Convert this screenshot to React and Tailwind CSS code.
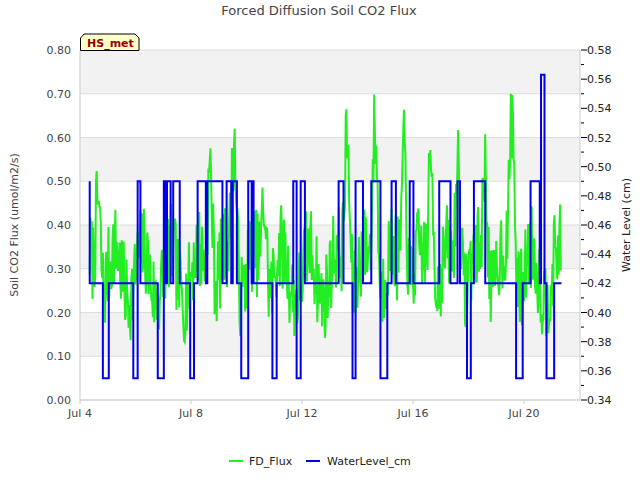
import React from "react";

function rng(seed){let s=seed;return()=>{s=(s*1664525+1013904223)%4294967296;return s/4294967296;};}
const X0=80,X1=580,Y0=50,Y1=400;
const dx=d=>80+d*27.75;
const xd=x=>(x-80)/27.75;
const yl=v=>400-v/0.8*350;
const yr=v=>400-(v-0.34)/0.24*350;

function buildGreen(){
  const r=rng(7);const pts=[];
  const peaks=[[210,0.56],[234,0.62],[264,0.47],[347,0.64],[375,0.67],[404,0.6],[431,0.58],[458,0.58],[485,0.56],[512,0.7],[98,0.48]];
  for(let d=0.35;d<=17.35;d+=0.025){
    const x=dx(d);
    let base=0.29+0.06*Math.sin(d*6.28);
    let p=0;for(const [c,h] of peaks){const k=Math.exp(-((x-c)*(x-c))/12);p=Math.max(p,k*(h-base));}
    let v=base+(r()-0.5)*0.2+p*0.9;
    v=Math.max(0.11,Math.min(0.7,v));
    pts.push([x,yl(v)]);
  }
  return pts.map(p=>p.join(",")).join(" ");
}
function buildBlue(){
  const r=rng(3);const pts=[];let d=0.35;let lvl=0.49;
  const drops=[105,135,160,190,243,273,298,352,382,467,518,548].map(xd);
  const lowZones=[[92,112],[120,136],[142,160],[178,190],[235,244],[258,282],[304,318],[320,333],[392,408],[424,435],[458,470],[482,510]].map(([a,b])=>[xd(a),xd(b)]);
  while(d<17.35){
    const step=0.03+r()*0.15;
    let nl;
    if(lowZones.some(([a,b])=>d>a&&d<b)) nl=0.42;
    else nl=r()<0.55?0.49:0.42;
    if(drops.some(x=>Math.abs(x-d)<0.09)) nl=0.355;
    if(Math.abs(d-xd(542))<0.06) nl=0.563;
    pts.push([dx(d),yr(lvl)]);pts.push([dx(d),yr(nl)]);
    lvl=nl;d+=step;
  }
  pts.push([dx(17.35),yr(lvl)]);
  return pts.map(p=>p.join(",")).join(" ");
}

export default function App(){
  const g=buildGreen(),b=buildBlue();
  const left=[0,0.1,0.2,0.3,0.4,0.5,0.6,0.7,0.8];
  const right=[];for(let i=0;i<=12;i++)right.push(0.34+i*0.02);
  const f={fontFamily:"'DejaVu Sans',sans-serif"};
  return(
  <div className="w-[640px] h-[480px] bg-white relative" style={f}>
    <svg width="640" height="480" className="absolute left-0 top-0">
      <text x="319" y="15" textAnchor="middle" fontSize="13" fill="#444">Forced Diffusion Soil CO2 Flux</text>
      <rect x={X0} y={Y0} width={500} height={350} fill="#fff"/>
      {[0.7,0.5,0.3,0.1].map(v=><rect key={v} x={X0} y={yl(v+0.1)} width={500} height={43.75} fill="#f2f2f2"/>)}
      {left.map(v=><line key={v} x1={X0} x2={X1} y1={yl(v)} y2={yl(v)} stroke="#ddd"/>)}
      <line x1={X0} x2={X0} y1={Y0} y2={Y1} stroke="#ccc"/>
      <line x1={X1} x2={X1} y1={Y0} y2={Y1} stroke="#ccc"/>
      <line x1={X0} x2={X1} y1={Y1} y2={Y1} stroke="#ccc"/>
      {left.map(v=><text key={v} x="71" y={yl(v)+4} textAnchor="end" fontSize="11" fill="#444">{v.toFixed(2)}</text>)}
      {right.map((v,i)=><g key={i}><line x1={X1+1} x2={X1+7} y1={yr(v)} y2={yr(v)} stroke="#000"/>
        {i<12&&<line x1={X1+1} x2={X1+4} y1={yr(v+0.01)} y2={yr(v+0.01)} stroke="#000"/>}
        <text x="587" y={yr(v)+4} fontSize="11" fill="#222">{v.toFixed(2)}</text></g>)}
      {[["Jul 4",0],["Jul 8",4],["Jul 12",8],["Jul 16",12],["Jul 20",16]].map(([t,d])=><g key={t}>
        <line x1={dx(d)} x2={dx(d)} y1={Y1} y2={Y1+4} stroke="#ccc"/>
        <text x={dx(d)} y="417" textAnchor="middle" fontSize="11" fill="#444">{t}</text></g>)}
      <text transform="translate(18,225) rotate(-90)" textAnchor="middle" fontSize="11" fill="#444">Soil CO2 Flux (umol/m2/s)</text>
      <text transform="translate(630,225) rotate(-90)" textAnchor="middle" fontSize="11" fill="#222">Water Level (cm)</text>
      <polyline points={g} fill="none" stroke="#22ee22" strokeWidth="2"/>
      <polyline points={b} fill="none" stroke="#0000ee" strokeWidth="2"/>
      <path d="M80.5 50.5 V38 L84 34 H135 L139 38 V50.5 Z" fill="#ffffcc" stroke="#000"/>
      <text x="87" y="47" fontSize="11" fontWeight="bold" fill="#990000">HS_met</text>
      <line x1="229" x2="243" y1="461" y2="461" stroke="#22ee22" strokeWidth="2"/>
      <text x="249" y="465" fontSize="11" fill="#222">FD_Flux</text>
      <line x1="306" x2="320" y1="461" y2="461" stroke="#0000ee" strokeWidth="2"/>
      <text x="327" y="465" fontSize="11" fill="#222">WaterLevel_cm</text>
    </svg>
  </div>);
}
